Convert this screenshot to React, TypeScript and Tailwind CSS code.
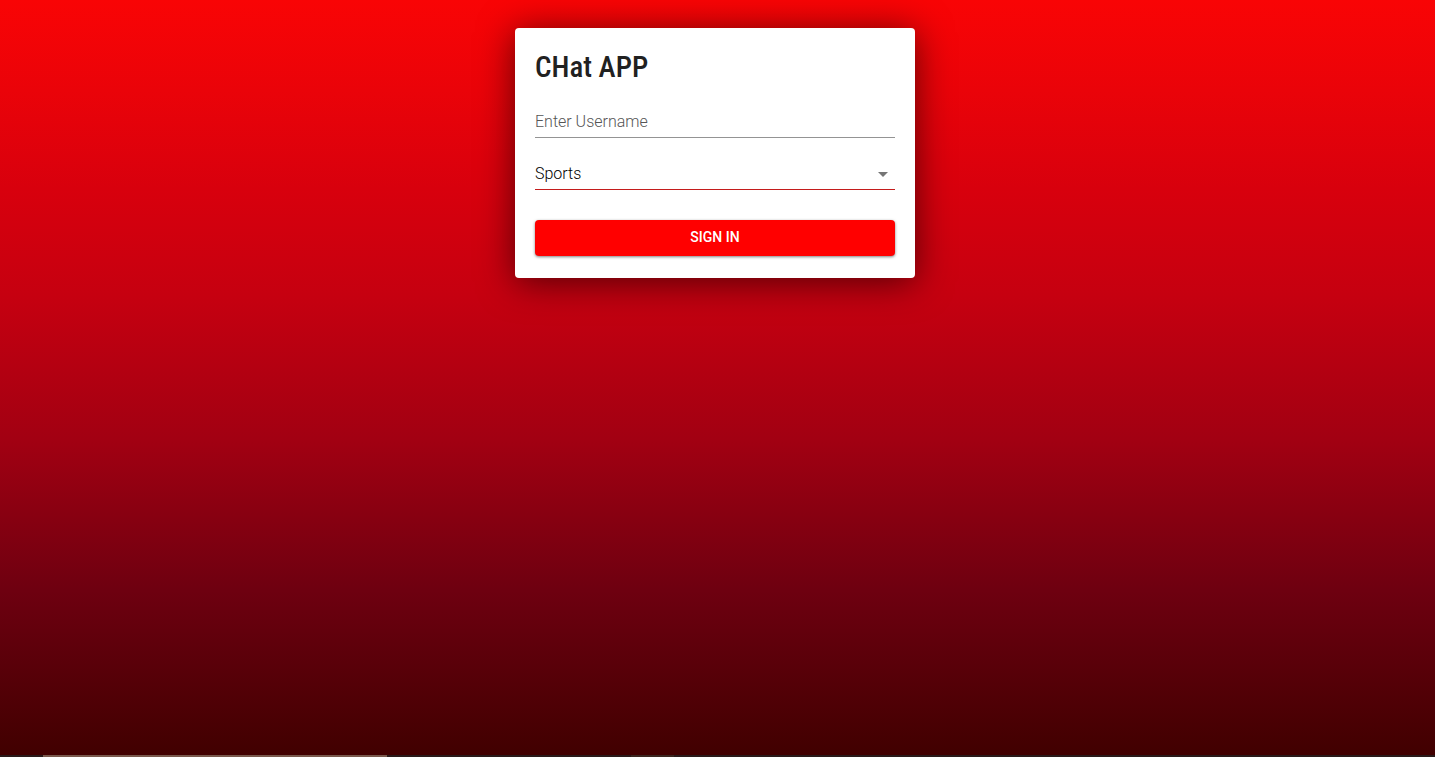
import { useState } from "react";

const rooms = ["Sports", "Music", "Movies"];

export default function App() {
  const [username, setUsername] = useState("");
  const [room, setRoom] = useState("Sports");

  return (
    <div className="flex min-h-screen flex-col bg-[linear-gradient(to_bottom,#f90405_0%,#ea0309_12%,#d8000d_25%,#c60010_39%,#a20012_58%,#6e0010_78%,#400000_100%)] font-[Roboto,sans-serif] text-base">
      <main className="flex flex-1 items-start justify-center pt-7 pr-[5px]">
        <form
          onSubmit={(e) => e.preventDefault()}
          className="flex w-full max-w-[400px] flex-col rounded bg-white px-5 pt-5 pb-[22px] shadow-[0_4px_36px_rgba(0,0,0,0.6)]"
        >
          <h1 className="font-['Roboto_Condensed',Roboto,sans-serif] text-[29px] leading-[38px] font-medium text-[#212121]">
            CHat APP
          </h1>
          <div className="mt-[18px] border-b border-[#949494]">
            <input
              type="text"
              aria-label="Enter Username"
              placeholder="Enter Username"
              value={username}
              onChange={(e) => setUsername(e.target.value)}
              className="block h-[33px] w-full bg-transparent pt-0.5 font-light text-black outline-none placeholder:text-[#555555]"
            />
          </div>
          <div className="relative mt-[18px] border-b border-[#c41c1c]">
            <select
              aria-label="Room"
              value={room}
              onChange={(e) => setRoom(e.target.value)}
              className="block h-[33px] w-full appearance-none bg-transparent pt-0.5 pr-6 font-light text-black outline-none"
            >
              {rooms.map((name) => (
                <option key={name}>{name}</option>
              ))}
            </select>
            <svg
              viewBox="0 0 24 24"
              aria-hidden="true"
              className="pointer-events-none absolute top-[6px] right-0 size-6 fill-[#757575]"
            >
              <path d="M7 10l5 5 5-5z" />
            </svg>
          </div>
          <button
            type="submit"
            className="mt-[30px] h-9 w-full rounded bg-[#ff0000] pb-0.5 text-sm font-medium text-white uppercase shadow-[0_1px_3px_rgba(0,0,0,0.5)]"
          >
            Sign in
          </button>
        </form>
      </main>
      <div className="flex h-0.5 bg-[#2a1a1a]" aria-hidden="true">
        <div className="ml-[3%] w-[24%] bg-[#79594d]" />
        <div className="ml-[17%] w-[3%] bg-[#3b2620]" />
      </div>
    </div>
  );
}
